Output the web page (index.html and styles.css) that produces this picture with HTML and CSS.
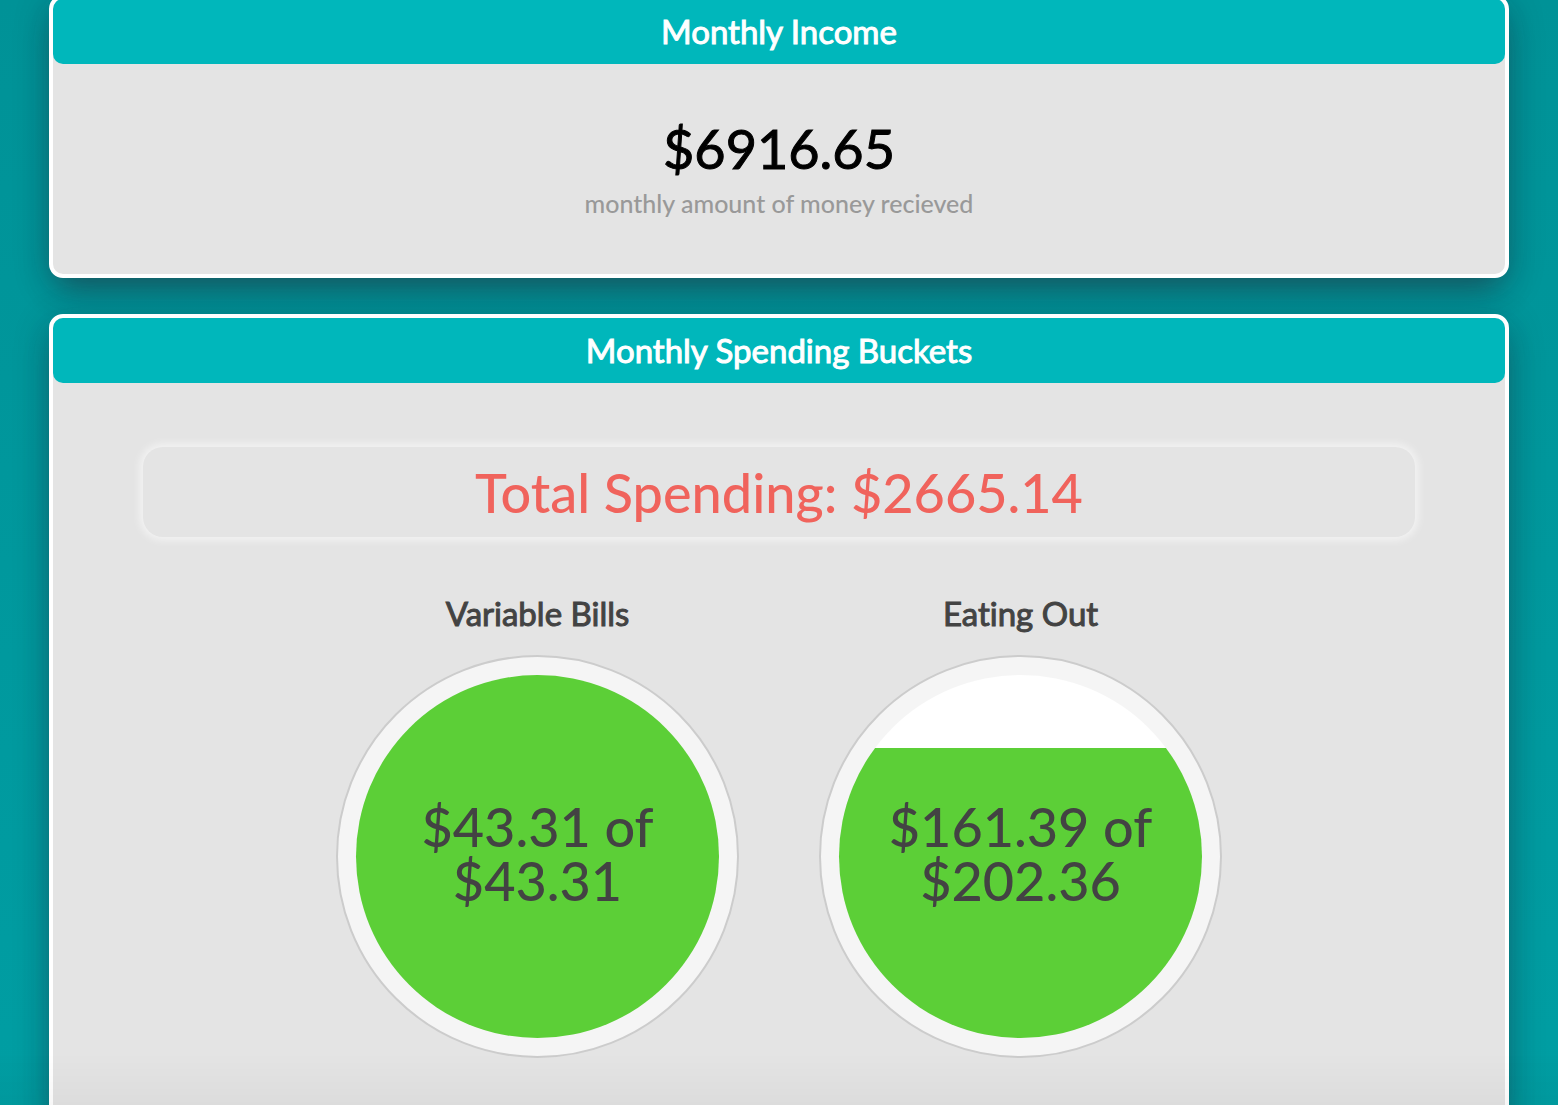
FILE: index.html
```html
<!DOCTYPE html>
<html lang="en">
<head>
<meta charset="utf-8">
<meta name="viewport" content="width=device-width, initial-scale=1">
<title>Monthly Budget</title>
<link rel="stylesheet" href="styles.css">
</head>
<body>
<main class="page">
  <section class="card">
    <h2 class="card-header">Monthly Income</h2>
    <div class="income">
      <p class="income-value">$6916.65</p>
      <p class="income-label">monthly amount of money recieved</p>
    </div>
  </section>
  <section class="card">
    <h2 class="card-header">Monthly Spending Buckets</h2>
    <div class="spending">
      <p class="total">Total Spending: $2665.14</p>
      <div class="buckets">
        <article class="bucket">
          <h3 class="bucket-title">Variable Bills</h3>
          <div class="gauge">
            <div class="gauge-body" style="--fill: 100%">
              <p class="gauge-text">$43.31 of $43.31</p>
            </div>
          </div>
        </article>
        <article class="bucket">
          <h3 class="bucket-title">Eating Out</h3>
          <div class="gauge">
            <div class="gauge-body" style="--fill: 80%">
              <p class="gauge-text">$161.39 of $202.36</p>
            </div>
          </div>
        </article>
      </div>
    </div>
  </section>
</main>
</body>
</html>
```
FILE: styles.css
```css
* {
  box-sizing: border-box;
}

html {
  overflow-x: hidden;
  scrollbar-width: none;
}

body {
  margin: 0;
  min-height: 100vh;
  background: linear-gradient(#009297, #009ea3);
  font-family: Lato, sans-serif;
  font-variant-ligatures: none;
  color: #434343;
}

/* soft shade along the bottom edge of the window */
body::after {
  content: "";
  position: fixed;
  inset: auto 0 0;
  height: 52px;
  background: linear-gradient(transparent, rgba(0, 0, 0, 0.03));
  pointer-events: none;
}

h2,
h3,
p {
  margin: 0;
  font-weight: 400;
  text-align: center;
}

.page {
  display: flex;
  flex-direction: column;
  gap: 36px;
  margin-top: -5px;
  padding: 0 49px;
}

.card {
  border: 4px solid #fff;
  border-radius: 14px;
  background: #e4e4e4;
  box-shadow: 0 8px 36px rgba(20, 20, 40, 0.24), 0 18px 32px -10px rgba(50, 40, 50, 0.45);
}

.card-header {
  padding: 12px;
  border-radius: 10px;
  background: #00b7bb;
  color: #fff;
  font-size: 33px;
  line-height: 41px;
  -webkit-text-stroke: 1px;
}

.income {
  padding: 56px 16px;
}

.income-value {
  color: #000;
  font-size: 54px;
  line-height: 58px;
  -webkit-text-stroke: 1px;
}

.income-label {
  padding-top: 10px;
  color: #999;
  font-size: 25px;
  font-weight: 500;
  line-height: 30px;
}

.spending {
  padding: 64px 90px;
}

.total {
  padding: 18px 16px 16px;
  border-radius: 20px;
  color: #f0635c;
  font-size: 54px;
  font-weight: 500;
  line-height: 56px;
  box-shadow: 0 0 8px 3px rgba(255, 255, 255, 0.6);
}

.buckets {
  display: flex;
  flex-wrap: wrap;
  justify-content: center;
  gap: 80px;
  padding: 56px 0 0;
}

.bucket-title {
  padding-bottom: 22px;
  font-size: 33px;
  line-height: 40px;
  -webkit-text-stroke: 1px;
}

.gauge {
  width: 403px;
  padding: 18px;
  border: 2px solid #ccc;
  border-radius: 50%;
  background: #f5f5f5;
}

.gauge-body {
  display: grid;
  place-items: center;
  aspect-ratio: 1;
  padding: 0 40px 6px;
  border-radius: 50%;
  background: linear-gradient(to top, #5ccf37 var(--fill), #fff var(--fill));
}

.gauge-text {
  font-size: 54px;
  font-weight: 500;
  line-height: 54px;
}
```
